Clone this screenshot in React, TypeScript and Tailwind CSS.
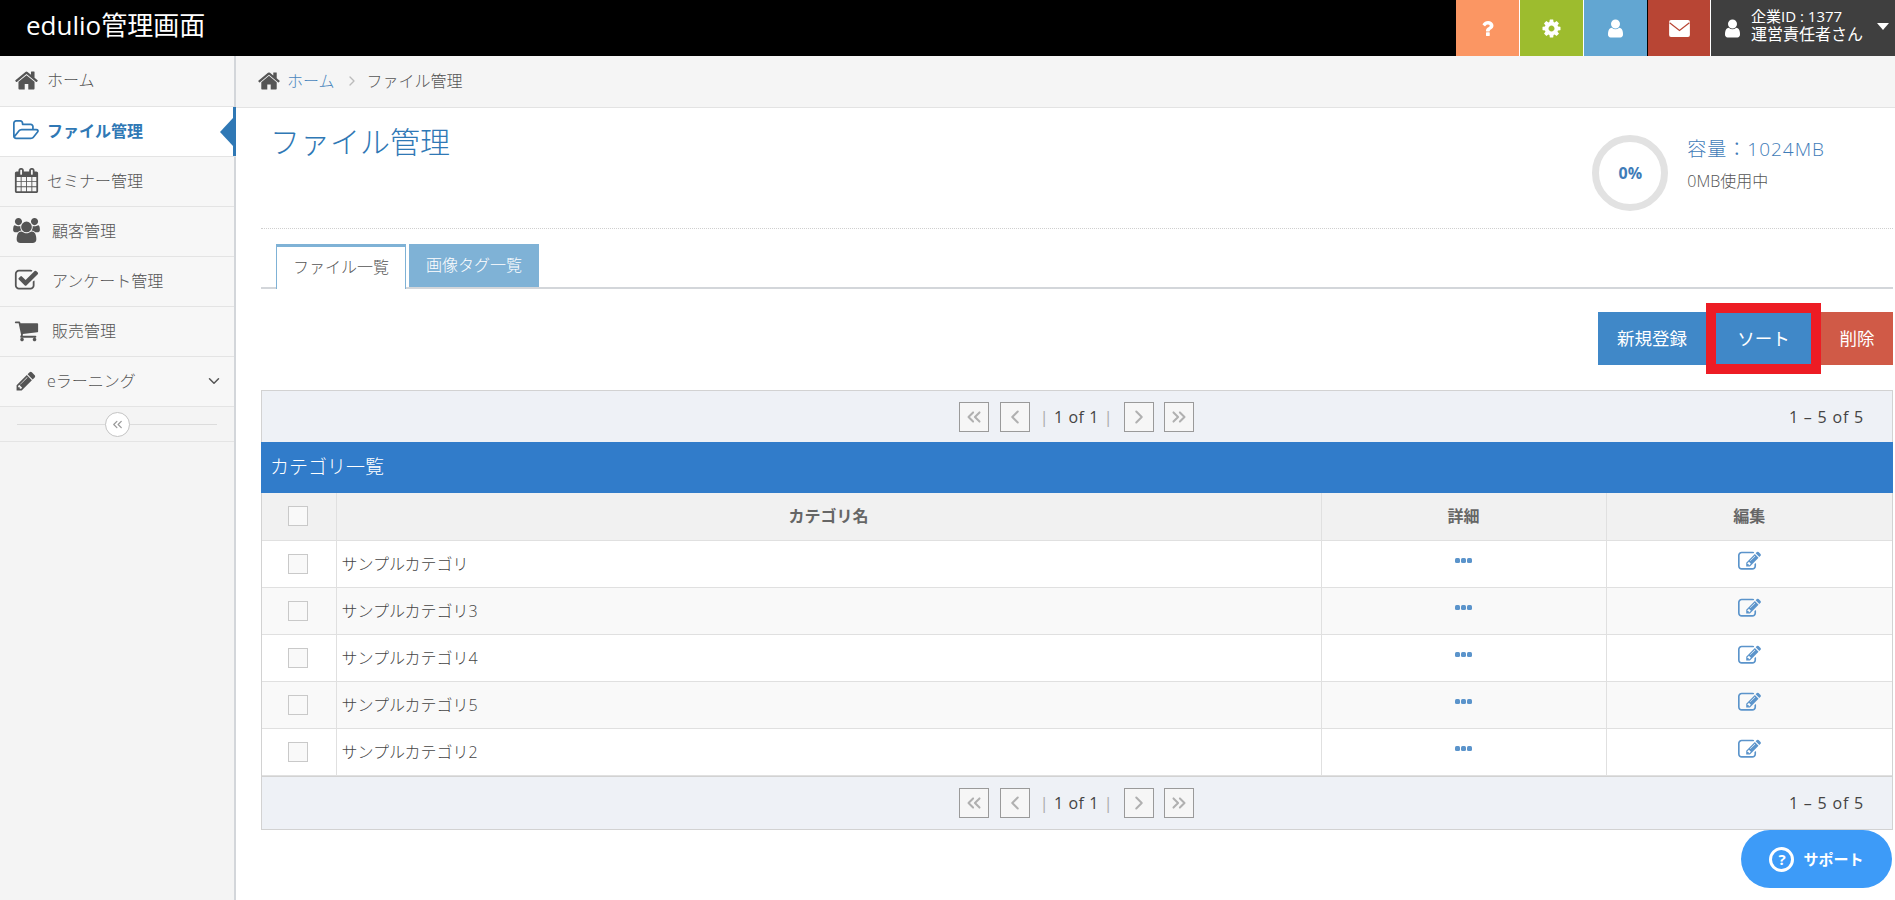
import React from 'react';
import { ChevronDown, ChevronLeft, ChevronRight, ChevronsLeft, ChevronsRight } from 'lucide-react';

// font-awesome 4 outlines, the icon packages only carry the newer versions
const paths = {
  home: 'M1472 992v480q0 26-19 45t-45 19h-384v-384h-256v384h-384q-26 0-45-19t-19-45v-480q0-1 .5-3t.5-3l575-474 575 474q1 2 1 6zm223-69l-62 74q-8 9-21 11h-3q-13 0-21-7l-692-577-692 577q-12 8-24 7-13-2-21-11l-62-74q-8-10-7-23.500t11-21.500l719-599q32-26 76-26t76 26l244 204v-195q0-14 9-23t23-9h192q14 0 23 9t9 23v408l219 182q10 8 11 21.500t-7 23.500z',
  folder: 'M1781 931q0-35-53-35h-1088q-40 0-85.500 21.500t-71.500 52.500l-294 363q-18 24-18 40 0 35 53 35h1088q40 0 86-22t71-53l294-363q18-22 18-39zm-1141-163h768v-160q0-40-28-68t-68-28h-576q-40 0-68-28t-28-68v-64q0-40-28-68t-68-28h-320q-40 0-68 28t-28 68v853l256-315q44-53 116-87.500t140-34.500zm1269 163q0 62-46 120l-295 363q-43 53-116 87.500t-140 34.500h-1088q-92 0-158-66t-66-158v-960q0-92 66-158t158-66h320q92 0 158 66t66 158v32h544q92 0 158 66t66 158v160h192q54 0 99 24.500t67 70.500q15 32 15 68z',
  calendar: 'M192 1664h288v-288h-288v288zm352 0h320v-288h-320v288zm-352-352h288v-320h-288v320zm352 0h320v-320h-320v320zm-352-384h288v-288h-288v288zm736 736h320v-288h-320v288zm-384-736h320v-288h-320v288zm768 736h288v-288h-288v288zm-384-352h320v-320h-320v320zm-352-864v-288q0-13-9.500-22.500t-22.500-9.500h-64q-13 0-22.500 9.500t-9.500 22.500v288q0 13 9.500 22.500t22.500 9.500h64q13 0 22.500-9.500t9.500-22.500zm736 864h288v-320h-288v320zm-384-384h320v-288h-320v288zm384 0h288v-288h-288v288zm32-480v-288q0-13-9.500-22.500t-22.500-9.500h-64q-13 0-22.500 9.500t-9.500 22.500v288q0 13 9.500 22.500t22.500 9.500h64q13 0 22.500-9.500t9.500-22.500zm384-64v1280q0 52-38 90t-90 38h-1408q-52 0-90-38t-38-90v-1280q0-52 38-90t90-38h128v-96q0-66 47-113t113-47h64q66 0 113 47t47 113v96h384v-96q0-66 47-113t113-47h64q66 0 113 47t47 113v96h128q52 0 90 38t38 90z',
  group: 'M593 896q-162 5-265 128h-134q-82 0-138-40.500t-56-118.500q0-353 124-353 6 0 43.500 21t97.500 42.500 119 21.500q67 0 133-23-5 37-5 66 0 139 81 256zm1071 637q0 120-73 189.500t-194 69.500h-874q-121 0-194-69.500t-73-189.500q0-53 3.500-103.500t14-109 26.500-108.500 43-97.500 62-81 85.500-53.500 111.500-20q10 0 43 21.500t73 48 107 48 135 21.500 135-21.500 107-48 73-48 43-21.500q61 0 111.500 20t85.500 53.500 62 81 43 97.500 26.500 108.500 14 109 3.500 103.500zm-1024-1277q0 106-75 181t-181 75-181-75-75-181 75-181 181-75 181 75 75 181zm704 384q0 159-112.500 271.500t-271.500 112.500-271.500-112.500-112.500-271.500 112.500-271.500 271.500-112.500 271.500 112.500 112.500 271.500zm576 225q0 78-56 118.500t-138 40.500h-134q-103-123-265-128 81-117 81-256 0-29-5-66 66 23 133 23 59 0 119-21.500t97.500-42.500 43.500-21q124 0 124 353zm-128-609q0 106-75 181t-181 75-181-75-75-181 75-181 181-75 181 75 75 181z',
  check: 'M1472 930v318q0 119-84.500 203.500t-203.500 84.500h-832q-119 0-203.500-84.500t-84.500-203.500v-832q0-119 84.500-203.500t203.500-84.500h832q63 0 117 25 15 7 18 23 3 17-9 29l-49 49q-10 10-23 10-3 0-9-2-23-6-45-6h-832q-66 0-113 47t-47 113v832q0 66 47 113t113 47h832q66 0 113-47t47-113v-254q0-13 9-22l64-64q10-10 23-10 6 0 12 3 20 8 20 29zm231-489l-814 814q-24 24-57 24t-57-24l-430-430q-24-24-24-57t24-57l110-110q24-24 57-24t57 24l263 263 647-647q24-24 57-24t57 24l110 110q24 24 24 57t-24 57z',
  cart: 'M704 1536q0 52-38 90t-90 38-90-38-38-90 38-90 90-38 90 38 38 90zm896 0q0 52-38 90t-90 38-90-38-38-90 38-90 90-38 90 38 38 90zm128-1088v512q0 24-16.500 42.500t-40.500 21.500l-1044 122q13 60 13 70 0 16-24 64h920q26 0 45 19t19 45-19 45-45 19h-1024q-26 0-45-19t-19-45q0-11 8-31.500t16-36 21.500-40 15.500-29.500l-177-823h-204q-26 0-45-19t-19-45 19-45 45-19h256q16 0 28.500 6.500t19.500 15.500 13 24.500 8 26 5.500 29.500 4.500 26h1201q26 0 45 19t19 45z',
  pencil: 'M491 1536l91-91-235-235-91 91v107h128v128h107zm523-928q0-22-22-22-10 0-17 7l-542 542q-7 7-7 17 0 22 22 22 10 0 17-7l542-542q7-7 7-17zm-54-192l416 416-832 832h-416v-416zm683 96q0 53-37 90l-166 166-416-416 166-165q36-38 90-38 53 0 91 38l235 234q37 39 37 91z',
  edit: 'M888 1184l116-116-152-152-116 116v56h96v96h56zm440-720q-16-16-33 1l-350 350q-17 17-1 33t33-1l350-350q17-17 1-33zm80 594v190q0 119-84.500 203.500t-203.500 84.500h-832q-119 0-203.500-84.500t-84.500-203.500v-832q0-119 84.500-203.500t203.500-84.500h832q63 0 117 25 15 7 18 23 3 17-9 29l-49 49q-14 14-32 8-23-6-45-6h-832q-66 0-113 47t-47 113v832q0 66 47 113t113 47h832q66 0 113-47t47-113v-126q0-13 9-22l64-64q15-15 35-7t20 29zm-96-738l288 288-672 672h-288v-288zm444 132l-92 92-288-288 92-92q28-28 68-28t68 28l152 152q28 28 28 68t-28 68z',
  user: 'M1536 1399q0 109-62.500 187t-150.500 78h-854q-88 0-150.500-78t-62.500-187q0-85 8.500-160.500t31.500-152 58.500-131 94-89 134.500-34.500q131 128 313 128t313-128q76 0 134.500 34.500t94 89 58.500 131 31.500 152 8.500 160.500zm-256-887q0 159-112.500 271.500t-271.500 112.500-271.500-112.500-112.500-271.500 112.500-271.500 271.500-112.500 271.500 112.500 112.500 271.500z',
  cog: 'M1152 896q0-106-75-181t-181-75-181 75-75 181 75 181 181 75 181-75 75-181zm512-109v222q0 12-8 23t-20 13l-185 28q-19 54-39 91 35 50 107 138 10 12 10 25t-9 23q-27 37-99 108t-94 71q-12 0-26-9l-138-108q-44 23-91 38-16 136-29 186-7 28-36 28h-222q-14 0-24.500-8.500t-11.500-21.500l-28-184q-49-16-90-37l-141 107q-10 9-25 9-14 0-25-11-126-114-165-168-7-10-7-23 0-12 8-23 15-21 51-66.500t54-70.500q-27-50-41-99l-183-27q-13-2-21-12.500t-8-23.500v-222q0-12 8-23t19-13l186-28q14-46 39-92-40-57-107-138-10-12-10-24 0-10 9-23 26-36 98.500-107.500t94.500-71.500q13 0 26 10l138 107q44-23 91-38 16-136 29-186 7-28 36-28h222q14 0 24.500 8.500t11.500 21.500l28 184q49 16 90 37l142-107q9-9 24-9 13 0 25 10 129 119 165 170 7 8 7 22 0 12-8 23-15 21-51 66.500t-54 70.500q26 50 41 98l183 28q13 2 21 12.500t8 23.500z',
  question: 'M1088 1256v240q0 16-12 28t-28 12h-240q-16 0-28-12t-12-28v-240q0-16 12-28t28-12h240q16 0 28 12t12 28zm316-600q0 54-15.500 101t-35 76.500-55 59.500-57.500 43.500-61 35.500q-41 23-68.500 65t-27.500 67q0 17-12 32.500t-28 15.500h-240q-15 0-25.500-18.500t-10.500-37.500v-45q0-83 65-156.500t143-108.500q59-27 84-56t25-76q0-42-46.500-74t-107.500-32q-65 0-108 29-35 25-107 115-13 16-31 16-12 0-25-8l-164-125q-13-10-15.500-25t5.500-28q160-266 464-266 80 0 161 31t146 83 106 127.500 41 158.500z',
};

function Fa({ name, w = 1792, className }: { name: keyof typeof paths; w?: number; className?: string }) {
  return (
    <svg viewBox={`0 0 ${w} 1792`} fill="currentColor" className={className}>
      <path d={paths[name]} />
    </svg>
  );
}

function Envelope({ className }: { className?: string }) {
  return (
    <svg viewBox="0 0 22 18" className={className}>
      <rect width="22" height="18" rx="2" fill="#fff" />
      <path d="M0.5 3 L11 11 L21.500 3" fill="none" stroke="#b84534" strokeWidth="1.300" />
    </svg>
  );
}

const navItems: { label: string; icon: React.ReactNode; gap: string }[] = [
  { label: 'ホーム', icon: <Fa name="home" className="w-[25px] h-[25px] -ml-[1px]" />, gap: 'w-[32px]' },
  { label: 'セミナー管理', icon: <Fa name="calendar" className="w-[25px] h-[25px] -ml-[1px]" />, gap: 'w-[32px]' },
  { label: '顧客管理', icon: <Fa name="group" w={1920} className="w-[27px] h-[25px] -ml-[2px]" />, gap: 'w-[37px]' },
  { label: 'アンケート管理', icon: <Fa name="check" className="w-[25px] h-[25px] -ml-[1px]" />, gap: 'w-[37px]' },
  { label: '販売管理', icon: <Fa name="cart" className="w-[25px] h-[25px] -ml-[1px]" />, gap: 'w-[37px]' },
];

const categories = [
  'サンプルカテゴリ',
  'サンプルカテゴリ3',
  'サンプルカテゴリ4',
  'サンプルカテゴリ5',
  'サンプルカテゴリ2',
];

function Sidebar() {
  const row = 'flex items-center h-[50px] pl-[15px] pb-[2px] border-b border-[#e4e4e4] bg-[#f7f7f7] text-[16px] text-[#555]';
  return (
    <aside className="w-[236px] shrink-0 bg-[#f4f4f4] border-r-2 border-[#d3d6da]">
      <div className={`${row} h-[51px]`}>
        <span className={navItems[0].gap}>{navItems[0].icon}</span>
        {navItems[0].label}
      </div>
      <div className="relative flex items-center h-[50px] pl-[13px] pb-[2px] border-b border-[#e4e4e4] bg-white text-[16px] font-bold text-[#2f78b5] -mr-[2px]">
        <span className="w-[34px]"><Fa name="folder" w={1920} className="w-[26px] h-[25px]" /></span>
        {'ファイル管理'}
        <span className="absolute right-0 top-0 bottom-0 w-[3px] bg-[#2f78b5]" />
        <span className="absolute right-[3px] top-[11px] w-0 h-0 border-y-[14px] border-y-transparent border-r-[13px] border-r-[#2f78b5]" />
      </div>
      {navItems.slice(1).map((item) => (
        <div key={item.label} className={row}>
          <span className={item.gap}>{item.icon}</span>
          {item.label}
        </div>
      ))}
      <div className={`${row} pr-[11px]`}>
        <span className="w-[32px]"><Fa name="pencil" className="w-[22px] h-[22px]" /></span>
        <span className="flex-1">eラーニング</span>
        <ChevronDown className="w-[18px] h-[18px]" />
      </div>
      <div className="relative flex items-center justify-center h-[35px] border-b border-[#e4e4e4]">
        <span className="absolute left-[17px] right-[17px] top-[17px] h-px bg-[#dcdcdc]" />
        <span className="relative flex items-center justify-center w-[25px] h-[25px] rounded-full bg-white border border-[#c4c4c4] text-[#999]">
          <ChevronsLeft className="w-[15px] h-[15px]" />
        </span>
      </div>
    </aside>
  );
}

function PagerButton({ children }: { children: React.ReactNode }) {
  return (
    <span className="flex items-center justify-center w-[30px] h-[30px] border border-[#9a9a9a] bg-[#f6f6f6] text-[#b0b0b0]">
      {children}
    </span>
  );
}

function Pager({ height }: { height: string }) {
  return (
    <div className={`relative flex items-center justify-center ${height} bg-[#eef1f6] text-[16px] font-normal text-[#444]`}>
      <div className="flex items-center mr-[2px]">
        <PagerButton><ChevronsLeft className="w-[22px] h-[22px]" strokeWidth={2.2} /></PagerButton>
        <span className="w-[11px]" />
        <PagerButton><ChevronLeft className="w-[22px] h-[22px]" strokeWidth={2.2} /></PagerButton>
        <span className="w-[94px] text-center whitespace-nowrap tracking-[0.6px]">
          <span className="text-[#aaa]">|</span> 1 of 1 <span className="text-[#aaa]">|</span>
        </span>
        <PagerButton><ChevronRight className="w-[22px] h-[22px]" strokeWidth={2.2} /></PagerButton>
        <span className="w-[10px]" />
        <PagerButton><ChevronsRight className="w-[22px] h-[22px]" strokeWidth={2.2} /></PagerButton>
      </div>
      <span className="absolute right-[28px] top-[14px] tracking-[0.8px]">1 – 5 of 5</span>
    </div>
  );
}

function CategoryTable() {
  const cell = 'border-r border-b border-[#e0e0e0] h-[47px]';
  const checkbox = 'block ml-[26px] w-[20px] h-[20px] border border-[#c9c9c9] bg-[#f9f9f9]';
  return (
    <div className="border border-[#d2d2d2]">
      <Pager height="h-[51px]" />
      <div className="flex items-center h-[51px] px-[9px] -mx-px bg-[#317cca] text-white text-[19px]">カテゴリ一覧</div>
      <table className="w-full table-fixed border-collapse text-[16px] text-[#444]">
        <colgroup>
          <col className="w-[74px]" />
          <col />
          <col className="w-[285px]" />
          <col className="w-[286px]" />
        </colgroup>
        <thead>
          <tr className="bg-[#f1f1f1] text-[#666]">
            <th className={cell}>
              <span className={checkbox} />
            </th>
            <th className={`${cell} font-bold`}>カテゴリ名</th>
            <th className={`${cell} font-bold`}>詳細</th>
            <th className="border-b border-[#e0e0e0] h-[47px] font-bold">編集</th>
          </tr>
        </thead>
        <tbody>
          {categories.map((name, i) => (
            <tr key={name} className={i % 2 === 1 ? 'bg-[#f9f9f9]' : 'bg-white'}>
              <td className={cell}>
                <span className={checkbox} />
              </td>
              <td className={`${cell} pl-[5px]`}>{name}</td>
              <td className={cell}>
                <span className="flex justify-center gap-[1px] -mt-[6px]">
                  <span className="w-[5px] h-[5px] rounded-[1.5px] bg-[#5b94cb]" />
                  <span className="w-[5px] h-[5px] rounded-[1.5px] bg-[#5b94cb]" />
                  <span className="w-[5px] h-[5px] rounded-[1.5px] bg-[#5b94cb]" />
                </span>
              </td>
              <td className="border-b border-[#e0e0e0] h-[47px]">
                <Fa name="edit" className="block mx-auto -mt-[5px] w-[23px] h-[23px] text-[#5b94cb]" />
              </td>
            </tr>
          ))}
        </tbody>
      </table>
      <div className="border-t border-[#d2d2d2]">
        <Pager height="h-[52px]" />
      </div>
    </div>
  );
}

export default function App() {
  return (
    <div className="relative flex flex-col h-[900px] overflow-hidden bg-white font-light font-['Open_Sans','Noto_Sans_CJK_JP',sans-serif]">
      <header className="flex items-stretch h-[56px] bg-black text-white">
        <div className="flex-1 pl-[26px] text-[26px] leading-[50px] font-normal">edulio管理画面</div>
        <div className="flex items-center justify-center w-[64px] bg-[#fb9663] border-r border-white"><Fa name="question" className="w-[21px] h-[21px]" /></div>
        <div className="flex items-center justify-center w-[64px] bg-[#9dbc2e] border-r border-white"><Fa name="cog" className="w-[21px] h-[21px]" /></div>
        <div className="flex items-center justify-center w-[64px] bg-[#62a6d2] border-r border-black"><Fa name="user" className="w-[21px] h-[21px]" /></div>
        <div className="flex items-center justify-center w-[63px] bg-[#b84534] border-r border-white"><Envelope className="w-[21px] h-[17px]" /></div>
        <div className="relative flex items-center w-[184px] pl-[11px] bg-[#3f3f3f] font-normal">
          <Fa name="user" className="w-[21px] h-[21px] shrink-0" />
          <div className="ml-[8px] -mt-[6px] whitespace-nowrap">
            <div className="text-[15px] leading-[18px]">企業ID : 1377</div>
            <div className="text-[16px] leading-[18px]">運営責任者さん</div>
          </div>
          <span className="absolute right-[6px] top-[23px] w-0 h-0 border-x-[6px] border-x-transparent border-t-[7px] border-t-white" />
        </div>
      </header>

      <div className="flex flex-1 min-h-0">
        <Sidebar />

        <main className="flex-1 min-w-0">
          <div className="flex items-center h-[52px] pl-[21px] pb-[2px] bg-[#f5f5f5] border-b border-[#e3e3e3] text-[16px] text-[#555]">
            <Fa name="home" className="w-[24px] h-[24px] text-[#555]" />
            <span className="ml-[6px] text-[#4a86bd]">ホーム</span>
            <ChevronRight className="ml-[9px] mr-[7px] w-[16px] h-[16px] text-[#bbb]" />
            <span>ファイル管理</span>
          </div>

          <div className="pl-[25px] pr-[2px]">
            <div className="flex justify-between h-[121px] border-b border-dotted border-[#cfcfcf]">
              <h1 className="pl-[9px] pt-[14px] text-[30px] leading-[40px] text-[#2f78b5]">ファイル管理</h1>
              <div className="flex items-start pt-[27px] pr-[68px]">
                <div className="flex items-center justify-center w-[76px] h-[76px] mr-[1px] rounded-full border-[7px] border-[#e2e2e2] text-[16px] font-bold text-[#3f7cb8]">0%</div>
                <div className="ml-[18px] mt-[1px]">
                  <div className="text-[19px] leading-[26px] tracking-[1px] text-[#3f7cb8]">容量：1024MB</div>
                  <div className="mt-[9px] text-[16px] leading-[20px] text-[#555]">0MB使用中</div>
                </div>
              </div>
            </div>

            <div className="flex items-end h-[60px] pl-[15px] border-b-2 border-[#d3d6da]">
              <div className="flex items-center justify-center w-[130px] h-[45px] pb-[2px] -mb-[2px] bg-white border-t-[3px] border-x border-[#7fb2d6] text-[16px] text-[#555]">ファイル一覧</div>
              <div className="flex items-center justify-center w-[130px] h-[43px] pb-[2px] ml-[3px] bg-[#7fb2d6] text-[16px] text-white">画像タグ一覧</div>
            </div>

            <div className="flex justify-end items-center h-[53px] mt-[23px] text-[17.5px] font-normal text-white">
              <div className="flex items-center justify-center w-[108px] h-[53px] bg-[#4088c8]">新規登録</div>
              <div className="flex items-center justify-center w-[115px] h-[71px] -my-[9px] pb-[1px] bg-[#4088c8] border-[10px] border-[#ed1c24]">ソート</div>
              <div className="flex items-center justify-center w-[72px] h-[53px] bg-[#d05a47]">削除</div>
            </div>

            <div className="mt-[25px]">
              <CategoryTable />
            </div>
          </div>
        </main>
      </div>

      <div className="absolute right-[3px] top-[830px] flex items-center justify-center w-[151px] h-[58px] rounded-full bg-[#3d9bf8] text-white text-[15px] font-bold">
        <span className="flex items-center justify-center w-[25px] h-[25px] rounded-full border-[3px] border-white text-[15px] mr-[9px]">?</span>
        サポート
      </div>
    </div>
  );
}
